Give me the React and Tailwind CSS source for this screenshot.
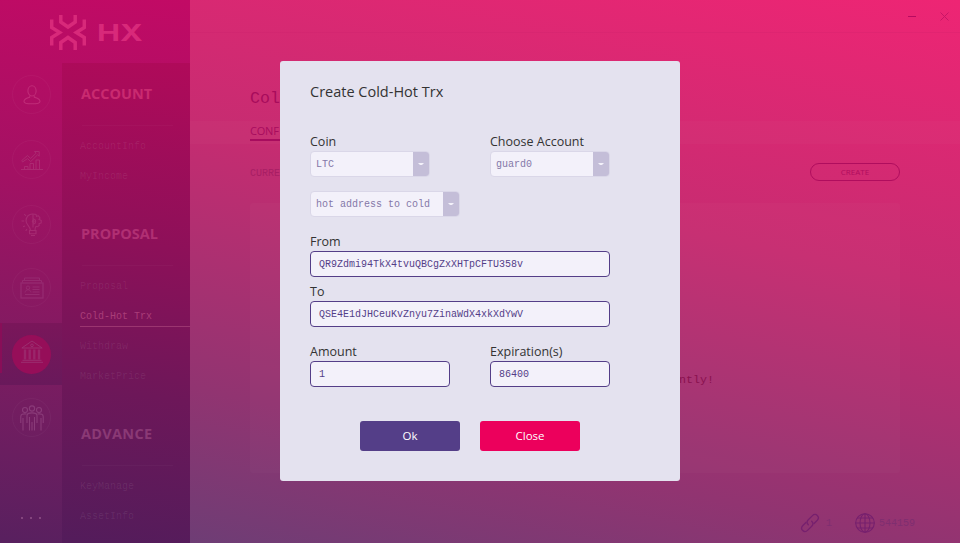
import React from "react";

const mono = "font-['Liberation_Mono','Noto_Sans_CJK_SC',monospace]";

function UserIcon() {
  return (
    <svg width="18" height="20" viewBox="0 0 18 20" fill="none" stroke="currentColor" strokeWidth="1.1">
      <ellipse cx="9" cy="5.9" rx="4.1" ry="5.1" />
      <path d="M6.800 10.500v1.500C5.500 13 1 13.400 1 16.400c0 1.600 2.400 2.400 8 2.400s8-.8 8-2.400c0-3-4.500-3.400-5.800-4.400v-1.500" />
    </svg>
  );
}

function ChartIcon() {
  return (
    <svg width="22" height="20" viewBox="0 0 22 20" fill="none" stroke="currentColor" strokeWidth="1">
      <path d="M0 19.500h22" />
      <path d="M3.500 19v-2.500h3.500v2.500M9 19v-5.500h3.500v5.500M15 19V10h3.500v9" />
      <path d="M1.500 12L0.800 10.500l5.700-5 3.200 3 5.300-5.300-1.500-1.700h4.700v4.700l-1.600-1.400-6.900 6.800-3.200-3z" />
    </svg>
  );
}

function BulbIcon() {
  return (
    <svg width="22" height="24" viewBox="0 0 22 24" fill="none" stroke="currentColor" strokeWidth="1.1">
      <path d="M12 1C8 .6 5 3.800 5 7.800c0 4 4.500 5.700 4.500 9.700" />
      <path d="M12 1l3 .4.500 2 2-.6 1.500 2.200-1 1.400 2.200 1v2.500l-2.200.8.200 1.800-1.800 1.200-1.400-.4c-.7 1.200-1 2.200-1 4.200" />
      <path d="M12 1v13.500M12 6.200c3.500-.8 3.500 5.300 0 4.600" />
      <circle cx="12.200" cy="8.500" r=".9" />
      <path d="M8.500 17.500h6.500v3.200H8.500zM10 22.500h4" />
      <path d="M5 3L3.200 1M3.200 8H.5M4 13l-2 .8M6 16l-1.300 2" />
    </svg>
  );
}

function CardIcon() {
  return (
    <svg width="24" height="22" viewBox="0 0 24 22" fill="none" stroke="currentColor" strokeWidth="1">
      <path d="M4.500 3V1h15v2M2.500 5.500v-2h19v2" />
      <rect x="1" y="6" width="22" height="15" strokeWidth="1.3" />
      <path d="M12.500 10h7M12.500 12.500h7M12.500 15h7M5 17.500h14.500" />
      <circle cx="8" cy="10.700" r="1.700" />
      <path d="M5 15.500c.5-3.700 5.500-3.700 6 0" />
    </svg>
  );
}

function BankIcon() {
  return (
    <svg className="-mt-1.5" width="22" height="23" viewBox="0 0 22 23" fill="none" stroke="currentColor" strokeWidth="1">
      <path d="M.8 8L11 1l10.200 7z" />
      <circle cx="11" cy="5.300" r="1.300" />
      <path d="M4 9.500v10M8.700 9.500v10M13.300 9.500v10M18 9.500v10" strokeWidth="2.400" strokeOpacity=".75" />
      <path d="M1.500 20.300h19M0 22.300h22" />
    </svg>
  );
}

function PeopleIcon() {
  return (
    <svg width="24" height="26" viewBox="0 0 24 26" fill="none" stroke="currentColor" strokeWidth="1.1">
      <circle cx="12" cy="3.500" r="2.600" />
      <circle cx="5" cy="5" r="2.500" />
      <circle cx="19" cy="5" r="2.500" />
      <path d="M7 18V10.500c0-3.500 10-3.500 10 0V18M9.500 12v13.500M14.500 12v13.500M12 17v8.500" />
      <path d="M6.500 9C2.500 8.500.8 9.500.8 11.500V18M3 13v12.500M17.500 9c4-.5 5.700.5 5.700 2.500V18M21 13v12.500" />
    </svg>
  );
}

function RailItem({ children, active, className }) {
  return (
    <div
      className={
        "flex w-[39px] h-[39px] shrink-0 items-center justify-center rounded-full ml-3 " +
        (active ? "bg-[#960e59] " : "border border-[#ffffff09] ") +
        className
      }
    >
      {children}
    </div>
  );
}

function MenuSection({ title, color, items, className }) {
  return (
    <div className={className}>
      <h2 className={"h-[30px] pl-[19px] font-['Open_Sans',sans-serif] text-[14.5px] leading-[30px] font-bold " + color}>
        {title}
      </h2>
      <div className="mt-4 mb-1 ml-5 h-px w-[91px] bg-[#ffffff07]" />
      {items.map((it) => (
        <div key={it} className="h-[30px] pl-[18px]">
          <div
            className={
              mono +
              " text-[10px] leading-[33px] " +
              (it === "Cold-Hot Trx"
                ? "h-[27px] border-b border-[#9b3570] text-[#a93d78]"
                : "text-[#ffffff14]")
            }
          >
            {it}
          </div>
        </div>
      ))}
    </div>
  );
}

function Label({ children }) {
  return <div className="h-[19px] text-[12.5px] leading-[19px] text-[#333]">{children}</div>;
}

function Select({ value, className }) {
  return (
    <div className={"flex h-[26px] rounded-[4px] border border-[#dad7e8] bg-[#f3f1fa] " + className}>
      <div className={mono + " grow pl-[5px] text-[10px] leading-[26px] text-[#8478a8]"}>{value}</div>
      <div className="flex w-4 items-center justify-center rounded-r-[3px] bg-[#c4bed8]">
        <svg width="6" height="3" viewBox="0 0 6 3" fill="#f3f1fa">
          <path d="M0 0h6L4 2H2z" />
        </svg>
      </div>
    </div>
  );
}

function Field({ value, className }) {
  return (
    <div
      className={
        mono +
        " h-[26px] rounded-[4px] border border-[#543e88] bg-[#f3f1fa] pl-2 text-[10px] leading-[26px] text-[#543e88] " +
        className
      }
    >
      {value}
    </div>
  );
}

function Sidebar() {
  return (
    <aside className="flex h-full w-[190px] shrink-0 flex-col bg-[linear-gradient(188deg,#c20a65_0%,#a31163_35%,#7c1c61_68%,#58205f_100%)]">
      <div className="flex h-[63px] shrink-0 items-start pt-[15px] pl-[50px] text-[#d8297a]">
        <svg width="36" height="35" viewBox="0 0 36 35" fill="none" stroke="currentColor" strokeWidth="3.5">
          <path d="M10.800 0v7l7.200 5 7.200-5V0" />
          <path d="M10.800 35v-7.500l7.200-5 7.200 5V35" />
          <path d="M1.700 4.500V12.500l8 5-8 5v8" />
          <path d="M34.300 4.500V12.500l-8 5 8 5v8" />
        </svg>
        <span className="ml-[11px] mt-[2px] origin-left scale-x-[1.34] font-['Inter',sans-serif] text-[23px] leading-[32px] font-bold">
          HX
        </span>
      </div>
      <div className="flex grow">
        <div className="flex w-[62px] shrink-0 flex-col">
          <RailItem className="mt-3 text-[#c02c78]"><UserIcon /></RailItem>
          <RailItem className="mt-[26px] text-[#ac2a72]"><ChartIcon /></RailItem>
          <RailItem className="mt-[26px] text-[#a62a72]"><BulbIcon /></RailItem>
          <RailItem className="mt-[24px] text-[#962a70]"><CardIcon /></RailItem>
          <div className="mt-[16px] flex h-[62px] items-center bg-[linear-gradient(180deg,#7a165a,#69195b)]">
            <div className="-mr-0.5 h-[50px] w-0.5 self-start bg-[#880e58]" />
            <RailItem active className="text-[#9b2f70]"><BankIcon /></RailItem>
          </div>
          <RailItem className="mt-[13px] text-[#8a3b79]"><PeopleIcon /></RailItem>
          <div className="mt-[80px] flex gap-[7px] pl-[21px]">
            <i className="h-0.5 w-0.5 bg-[#84457e]" />
            <i className="h-0.5 w-0.5 bg-[#84457e]" />
            <i className="h-0.5 w-0.5 bg-[#84457e]" />
          </div>
        </div>
        <nav className="w-[128px] bg-[linear-gradient(188deg,#b00a5a_0%,#8d1059_38%,#6d1759_68%,#531c5b_100%)] pt-4">
          <MenuSection title="ACCOUNT" color="text-[#c92a70]" items={["AccountInfo", "MyIncome"]} />
          <MenuSection
            className="mt-[29px]"
            title="PROPOSAL"
            color="text-[#b02f73]"
            items={["Proposal", "Cold-Hot Trx", "Withdraw", "MarketPrice"]}
          />
          <MenuSection
            className="mt-[29px] tracking-[.3px] [&_div]:tracking-normal"
            title="ADVANCE"
            color="text-[#8a3975]"
            items={["KeyManage", "AssetInfo"]}
          />
        </nav>
      </div>
    </aside>
  );
}

function Main() {
  return (
    <main className="flex h-full w-[770px] flex-col bg-[linear-gradient(192deg,#ee2574_0%,#c62c71_41%,#913471_78%,#6e3d75_100%)]">
      <div className="flex h-[33px] shrink-0 items-center justify-end border-b border-[#c8206a33] pr-[11px]">
        <div className="h-px w-2 bg-[#b80a60]" />
        <svg className="ml-6" width="9" height="9" viewBox="0 0 9 9" stroke="#c81566" strokeWidth="1">
          <path d="M.5.5l8 8M8.500.5l-8 8" />
        </svg>
      </div>
      <div className={mono + " mt-[51px] ml-[60px] h-[26px] text-[16.6px] leading-[29px] text-[#a80c5c]"}>Col</div>
      <div className="mt-[11px] h-[23px] bg-[#ffffff05] pl-[60px]">
        <div className="h-[20px] w-[30px] border-b-2 border-[#a80c5e] font-['Open_Sans',sans-serif] text-[11px] leading-[20px] tracking-[-0.2px] text-[#a80c5e]">
          CONF
        </div>
      </div>
      <div className="mt-[19px] flex h-[18px] items-center justify-between pr-[60px] pl-[60px]">
        <span className={mono + " mt-[2px] text-[10px] text-[#a81e64]"}>CURRE</span>
        <span className="flex h-[18px] w-[90px] items-center justify-center rounded-full border border-[#b00d5e] font-['Open_Sans',sans-serif] text-[8px] text-[#b00d5e]">
          CREATE
        </span>
      </div>
      <div className="mt-[22px] ml-[60px] flex h-[270px] w-[650px] items-center rounded-[3px] bg-[#ffffff05] pt-[86px] pl-[430px]">
        <span className={mono + " -ml-px text-[11.67px] text-[#8a1250]"}>ntly!</span>
      </div>
      <div className={mono + " mt-[40px] flex h-5 items-center pl-[610px] text-[10px] text-[#7f2e70]"}>
        <svg width="20" height="20" viewBox="0 0 20 20" fill="none" stroke="#76206e" strokeWidth="1.3" strokeLinecap="round">
          <path d="M8.300 11.800c-1.700-1.700-1.300-3.700 0-5L12.500 2.600c1.500-1.500 3.500-1.500 4.800-.1 1.400 1.400 1.400 3.300 0 4.800l-3.200 3.200" />
          <path d="M11.700 8.200c1.700 1.700 1.300 3.700 0 5l-4.200 4.200c-1.500 1.500-3.500 1.500-4.800.1-1.400-1.400-1.400-3.300 0-4.800l3.200-3.200" />
        </svg>
        <span className="ml-1.5 w-[29px]">1</span>
        <svg width="20" height="20" viewBox="0 0 20 20" fill="none" stroke="#76206e" strokeWidth="1.1">
          <circle cx="10" cy="10" r="9.300" />
          <ellipse cx="10" cy="10" rx="5" ry="9.300" />
          <path d="M10 .7v18.600M.7 10h18.600M2.200 5h15.600M2.200 15h15.600" />
        </svg>
        <span className="mt-px ml-1">544159</span>
      </div>
    </main>
  );
}

function Dialog() {
  return (
    <div className="absolute top-[61px] left-[280px] h-[420px] w-[400px] rounded-[3px] bg-[#e4e2ef] px-[30px] pt-[21px] font-['Open_Sans',sans-serif]">
      <h1 className="h-5 text-[14.5px] leading-[20px] text-[#333]">Create Cold-Hot Trx</h1>
      <div className="mt-[30px] flex gap-[60px]">
        <div>
          <Label>Coin</Label>
          <Select value="LTC" className="w-[120px]" />
        </div>
        <div>
          <Label>Choose Account</Label>
          <Select value="guard0" className="w-[120px]" />
        </div>
      </div>
      <Select value="hot address to cold" className="mt-[14px] w-[150px]" />
      <div className="mt-[15px]">
        <Label>From</Label>
        <Field value="QR9Zdmi94TkX4tvuQBCgZxXHTpCFTU358v" className="w-[300px]" />
      </div>
      <div className="mt-[5px]">
        <Label>To</Label>
        <Field value="QSE4E1dJHCeuKvZnyu7ZinaWdX4xkXdYwV" className="w-[300px]" />
      </div>
      <div className="mt-[15px] flex gap-10">
        <div>
          <Label>Amount</Label>
          <Field value="1" className="w-[140px]" />
        </div>
        <div>
          <Label>Expiration(s)</Label>
          <Field value="86400" className="w-[120px]" />
        </div>
      </div>
      <div className="mt-[34px] flex gap-5 pl-[50px] text-[11.5px] text-white">
        <button className="h-[30px] w-[100px] rounded-[3px] bg-[#543e88]">Ok</button>
        <button className="h-[30px] w-[100px] rounded-[3px] bg-[#ec005c]">Close</button>
      </div>
    </div>
  );
}

export default function App() {
  return (
    <div className="relative flex h-[543px] w-[960px] overflow-hidden">
      <Sidebar />
      <Main />
      <Dialog />
    </div>
  );
}
